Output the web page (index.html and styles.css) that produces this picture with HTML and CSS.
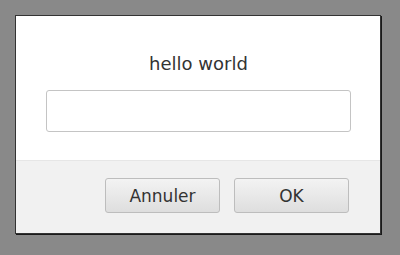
FILE: index.html
```html
<!DOCTYPE html>
<html lang="fr">
<head>
    <meta charset="UTF-8" />
    <title>Prompt</title>
    <link rel="stylesheet" href="styles.css">
</head>
<body>
    <div class="dialog">
        <div class="dialog-body">
            <p class="message">hello world</p>
            <input type="text" class="answer" />
        </div>
        <div class="dialog-buttons">
            <button class="btn">Annuler</button>
            <button class="btn">OK</button>
        </div>
    </div>
</body>
</html>
```

FILE: styles.css
```css
html,
body {
    margin: 0;
    height: 100%;
    background: #898989;
}
body {
    padding: 15px;
    box-sizing: border-box;
    font-family: "DejaVu Sans", sans-serif;
    color: #333;
}
.dialog {
    width: 366px;
    height: 219px;
    box-sizing: border-box;
    background: #fff;
    border: 1px solid #333;
    box-shadow: 1px 1px 0 #1a1a1a;
    display: flex;
    flex-direction: column;
}
.dialog-body {
    height: 144px;
    box-sizing: border-box;
    padding: 0 29px 0 30px;
    display: flex;
    flex-direction: column;
}
.message {
    margin: 38px 0 0;
    height: 36px;
    font-size: 18px;
    line-height: 20px;
    text-align: center;
}
.answer {
    width: 100%;
    height: 42px;
    box-sizing: border-box;
    margin: 0;
    border: 1px solid #c4c4c4;
    border-radius: 3px;
    background: #fff;
}
.dialog-buttons {
    flex: 1;
    background: #f1f1f1;
    border-top: 1px solid #e6e6e6;
    display: flex;
    justify-content: flex-end;
    gap: 14px;
    padding: 17px 31px 0 0;
}
.btn {
    width: 115px;
    height: 35px;
    box-sizing: border-box;
    border: 1px solid #bdbdbd;
    border-radius: 3px;
    background: linear-gradient(#f3f3f3, #dedede);
    font-family: "DejaVu Sans", sans-serif;
    font-size: 17px;
    color: #333;
}
```
